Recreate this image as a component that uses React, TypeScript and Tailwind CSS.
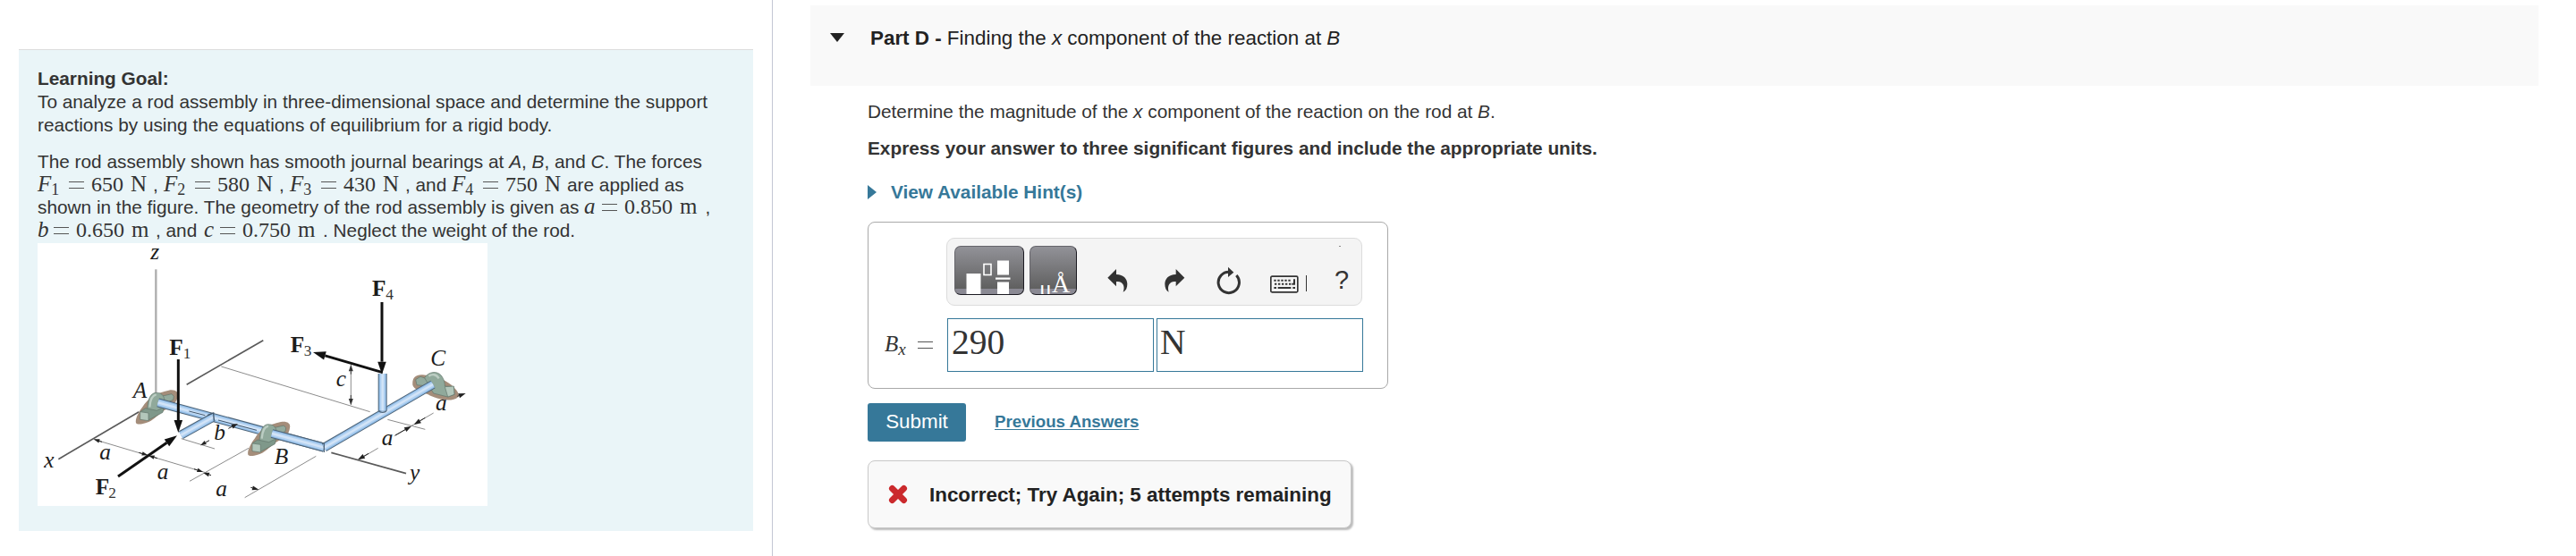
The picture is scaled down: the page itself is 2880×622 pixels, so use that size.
import { ReactNode } from "react";

function Var({ name, sub, className = "" }: { name: string; sub?: string; className?: string }) {
    return (
        <span className={`inline-block leading-[20px] font-['Liberation_Serif'] text-[25px] italic ${className}`}>
            {name}
            {sub && <span className="relative top-[4px] text-[18px] not-italic">{sub}</span>}
        </span>
    );
}

function Equals({ className = "" }: { className?: string }) {
    return (
        <span className={`inline-block h-[8px] w-[17px] border-y border-[#555] ${className}`} />
    );
}

function Qty({ value, unit, className = "" }: { value: string; unit: string; className?: string }) {
    return (
        <span className={`inline-block leading-[20px] font-['Liberation_Serif'] text-[24px] ${className}`}>
            {value}
            <span className="ml-[8px] text-[25px]">{unit}</span>
        </span>
    );
}

// Force term such as F1 = 650 N
function Force({ index, value }: { index: string; value: string }) {
    return (
        <span className="inline-block w-[129px] leading-[20px]">
            <Var name="F" sub={index} className="w-[35px]" />
            <Equals className="relative -top-[3px]" />
            <Qty value={value} unit="N" className="ml-[8px]" />
        </span>
    );
}

const rods = [
    "M404 535 L961 686",
    "M589 584 L481 644",
    "M961 686 L1326 474",
    "M1157 438 L1157 562",
];

function Rod({ d }: { d: string }) {
    return (
        <g fill="none" strokeLinejoin="round">
            <path d={d} stroke="#4e6478" strokeWidth="30" />
            <path d={d} stroke="#8fbbe6" strokeWidth="24" />
            <path d={d} stroke="#b4d3f2" strokeWidth="17" />
            <path d={d} stroke="#d3e4f7" strokeWidth="7" />
        </g>
    );
}

function Arrow({ x1, y1, x2, y2, size = 42, width = 9, color = "#111" }: { x1: number; y1: number; x2: number; y2: number; size?: number; width?: number; color?: string }) {
    const len = Math.hypot(x2 - x1, y2 - y1);
    const ux = (x2 - x1) / len;
    const uy = (y2 - y1) / len;
    const bx = x2 - ux * size;
    const by = y2 - uy * size;
    const half = size * 0.34;
    return (
        <g>
            <line x1={x1} y1={y1} x2={bx} y2={by} stroke={color} strokeWidth={width} />
            <polygon points={`${x2},${y2} ${bx - uy * half},${by + ux * half} ${bx + uy * half},${by - ux * half}`} fill={color} />
        </g>
    );
}

function Bearing({ transform }: { transform?: string }) {
    return (
        <g transform={transform}>
            <path d="M330 604 C326 590 342 562 352 550 C368 522 398 502 440 494 C462 490 474 500 470 514 C468 536 450 548 424 562 C400 578 388 598 362 604 C348 608 334 610 330 604Z" fill="#a48d7a" />
            <path d="M415 514 L450 506 L457 514 L455 526 L420 540Z" fill="#93aa9d" stroke="#61746a" strokeWidth="2" />
            <path d="M368 558 C370 520 380 504 396 502 C416 502 424 510 426 530 L424 552 L400 566Z" fill="#90a99b" stroke="#61746a" strokeWidth="2" />
            <path d="M376 550 C378 524 386 510 398 508" fill="none" stroke="#bccdc3" strokeWidth="7" />
            <path d="M344 566 L362 554 L400 562 L424 550 L420 568 L372 594Z" fill="#7f988a" stroke="#61746a" strokeWidth="2" />
            <path d="M344 566 L372 570 L372 596 L344 592Z" fill="#b3c7bb" stroke="#61746a" strokeWidth="2" />
        </g>
    );
}

function Figure() {
    return (
        <svg className="mt-px block h-[294px] w-[503px] overflow-visible bg-white" viewBox="0 0 1509 882" xmlns="http://www.w3.org/2000/svg">
            {/* Axes and extension lines */}
            <g fill="none" stroke="#8c8c8c" strokeWidth="3">
                <path d="M397 88 V510" stroke="#adadad" strokeWidth="7" />
                <path d="M500 475 L757 326" stroke="#5a5a5a" strokeWidth="5" />
                <path d="M70 725 L340 566" stroke="#5a5a5a" strokeWidth="5" />
                <path d="M985 703 L1236 773" stroke="#5a5a5a" strokeWidth="5" />
                <path d="M616 414 L1115 566" />
                <path d="M1174 592 L1300 625" />
                <path d="M190 659 L570 772" />
                <path d="M510 799 L708 688" />
                <path d="M695 854 L934 715" />
                <path d="M482 656 L594 690" />
                <path d="M1051 408 V542" />
                <path d="M1076 727 L1142 688 M1196 647 L1328 570" />
            </g>

            {/* Small dimension arrows */}
            <Arrow x1={216} y1={667} x2={188} y2={658} size={20} width={3} color="#222" />
            <Arrow x1={340} y1={703} x2={370} y2={712} size={20} width={3} color="#222" />
            <Arrow x1={402} y1={722} x2={372} y2={713} size={20} width={3} color="#222" />
            <Arrow x1={525} y1={758} x2={555} y2={768} size={20} width={3} color="#222" />
            <Arrow x1={582} y1={779} x2={556} y2={771} size={20} width={3} color="#222" />
            <Arrow x1={715} y1={820} x2={742} y2={827} size={22} width={3} color="#222" />
            <Arrow x1={576} y1={662} x2={546} y2={679} size={20} width={3} color="#222" />
            <Arrow x1={1051} y1={440} x2={1051} y2={408} size={22} width={3} color="#333" />
            <Arrow x1={1051} y1={510} x2={1051} y2={544} size={22} width={3} color="#333" />
            <Arrow x1={1110} y1={706} x2={1074} y2={727} size={24} width={3} color="#222" />
            <Arrow x1={1200} y1={645} x2={1254} y2={614} size={24} width={3} color="#222" />
            <Arrow x1={1300} y1={586} x2={1262} y2={609} size={24} width={3} color="#222" />

            {/* Bearings and rods */}
            <Bearing />
            <Rod d={rods[0]} />
            <path d="M508 564 L562 578 M606 594 L735 628" stroke="#42586e" strokeWidth="3" />
            <Rod d={rods[1]} />
            <path d="M570 578 L590 570 L592 596" fill="none" stroke="#42586e" strokeWidth="4" />
            <Arrow x1={640} y1={622} x2={672} y2={606} size={22} width={3} color="#222" />
            <Bearing transform="translate(376 106)" />
            <Rod d="M786 639 L961 686" />
            <path d="M1258 476 C1256 452 1268 440 1292 442 C1340 446 1376 462 1396 484 C1418 506 1418 518 1396 524 C1370 532 1330 520 1310 508 C1290 498 1262 492 1258 476Z" fill="#a48d7a" />
            <path d="M1268 458 L1284 448 L1314 458 L1310 480 L1272 476Z" fill="#93aa9d" stroke="#61746a" strokeWidth="2" />
            <path d="M1298 452 C1312 430 1340 428 1354 444 C1364 458 1366 470 1366 480 L1396 482 L1398 508 L1376 516 L1328 504Z" fill="#90a99b" stroke="#61746a" strokeWidth="2" />
            <path d="M1366 482 L1396 480 L1398 508 L1376 516Z" fill="#b3c7bb" stroke="#61746a" strokeWidth="2" />
            <path d="M1312 446 C1324 438 1338 440 1346 454" fill="none" stroke="#bccdc3" strokeWidth="7" />
            <Rod d={rods[2]} />
            <Rod d={rods[3]} />
            <path d="M961 670 V702" stroke="#4e6478" strokeWidth="4" />
            <path d="M1143 562 C1150 570 1164 570 1171 562" fill="none" stroke="#4e6478" strokeWidth="4" />
            <Arrow x1={1408} y1={514} x2={1436} y2={504} size={24} width={3} color="#222" />

            {/* Forces */}
            <Arrow x1={472} y1={390} x2={472} y2={636} />
            <Arrow x1={270} y1={783} x2={468} y2={646} />
            <Arrow x1={1155} y1={198} x2={1155} y2={440} />
            <Arrow x1={1157} y1={434} x2={924} y2={366} />

            <g fontFamily="Liberation Serif, serif" fontSize="76" fill="#1c1c1c">
                <g fontWeight="bold">
                    <text x="442" y="375">F</text>
                    <text x="194" y="842">F</text>
                    <text x="848" y="366">F</text>
                    <text x="1122" y="178">F</text>
                </g>
                <g fontSize="52" fill="#333">
                    <text x="488" y="388">1</text>
                    <text x="238" y="855">2</text>
                    <text x="893" y="379">3</text>
                    <text x="1168" y="190">4</text>
                </g>
                <g fontStyle="italic">
                    <text x="379" y="53">z</text>
                    <text x="22" y="752">x</text>
                    <text x="1248" y="796">y</text>
                    <text x="320" y="519">A</text>
                    <text x="794" y="741">B</text>
                    <text x="1318" y="411">C</text>
                    <text x="208" y="726">a</text>
                    <text x="401" y="793">a</text>
                    <text x="598" y="850">a</text>
                    <text x="592" y="661">b</text>
                    <text x="1001" y="480">c</text>
                    <text x="1154" y="678">a</text>
                    <text x="1335" y="562">a</text>
                </g>
            </g>
        </svg>
    );
}

function ToolButton({ className = "", children }: { className?: string; children: ReactNode }) {
    return (
        <button className={`relative h-[55px] overflow-hidden rounded-[7px] border border-r-[#1c1b22] border-b-[#1c1b22] border-t-[#66656b] border-l-[#66656b] bg-[linear-gradient(to_bottom,#929298_0%,#606060_88%,#8a8993_89%,#8a8993_100%)] ${className}`}>
            {children}
        </button>
    );
}

function Toolbar() {
    return (
        <div className="ml-[87px] flex h-[76px] w-[465px] items-start rounded-[9px] border border-[#dcdcdc] bg-[#f4f4f4] pt-[8px] pl-[8px] text-[#333]">
            <ToolButton className="w-[78px]">
                <svg className="absolute -top-px -left-px" width="78" height="55" viewBox="0 0 78 55">
                    <rect x="13.5" y="31" width="16" height="23" fill="#fff" />
                    <rect x="33" y="20.5" width="8" height="12" fill="none" stroke="#fff" strokeWidth="1.6" />
                    <rect x="48" y="16.5" width="13" height="16" fill="#fff" />
                    <rect x="46" y="35.5" width="16.5" height="2.2" fill="#fff" />
                    <rect x="48" y="40.5" width="13" height="13.5" fill="#fff" />
                </svg>
            </ToolButton>
            <ToolButton className="ml-[6px] w-[53px]">
                <span className="absolute left-[10px] top-[29px] font-['Liberation_Serif'] text-[26px] leading-[36px] text-white">μ</span>
                <span className="absolute left-[24px] top-[24px] font-['Liberation_Serif'] text-[28px] leading-[36px] text-white">Å</span>
            </ToolButton>
            <svg className="ml-[33px] mt-[26px]" width="24" height="26" viewBox="0 0 72 78">
                <path d="M4 29 L33 0 V18 C58 18 70 34 70 50 C70 62 66 72 56 77 C60 66 60 54 52 47 C47 43 41 42 33 42 V58Z" fill="currentColor" />
            </svg>
            <svg className="ml-[40px] mt-[26px]" width="24" height="26" viewBox="0 0 72 78">
                <path d="M70 29 L41 0 V18 C16 18 4 34 4 50 C4 62 8 72 17 77 C14 66 14 54 22 47 C27 43 33 42 41 42 V58Z" fill="currentColor" />
            </svg>
            <svg className="ml-[35px] mt-[23px]" width="28" height="32" viewBox="0 0 84 96">
                <path d="M45 19 A35 35 0 1 0 67 30" fill="none" stroke="currentColor" strokeWidth="9" />
                <path d="M39 2 L58 20 L39 36Z" fill="currentColor" />
            </svg>
            <svg className="ml-[32px] mt-[33px]" width="32" height="20" viewBox="0 0 96 60">
                <rect x="2.5" y="3.5" width="90" height="53" rx="4" fill="none" stroke="currentColor" strokeWidth="5" />
                <path d="M13 17 H72 M15 29 H72" stroke="currentColor" strokeWidth="6" strokeDasharray="7 5" />
                <path d="M13 42 H21 M26 42 H70 M76 42 H84 M73 29 H81 V13" fill="none" stroke="currentColor" strokeWidth="6" />
            </svg>
            <span className="ml-[8px] mt-[33px] h-[18px] w-px bg-[#333]" />
            <span className="relative ml-[31px] mt-[20px] text-[29px] leading-[36px]">
                ?
                <span className="absolute left-[5px] -top-[20px] h-px w-[2px] bg-[#888]" />
            </span>
        </div>
    );
}

export default function App() {
    return (
        <div className="flex h-[622px] w-[2880px] overflow-hidden bg-white font-['Liberation_Sans',sans-serif] text-[20.8px] leading-[26px] text-[#333]">
            <aside className="w-[864px] shrink-0 border-r border-[#c3c7d3] pt-[55px] pl-[21px]">
                <div className="h-[539px] w-[821px] whitespace-nowrap border-t border-[#dcdcdc] bg-[#eaf5f8] pt-[19px] pl-[21px]">
                    <p className="h-[26px] font-bold">Learning Goal:</p>
                    <p className="h-[26px]">To analyze a rod assembly in three-dimensional space and determine the support</p>
                    <p className="h-[26px]">reactions by using the equations of equilibrium for a rigid body.</p>

                    <p className="mt-[15px] h-[26px]">
                        The rod assembly shown has smooth journal bearings at <i>A</i>, <i>B</i>, and <i>C</i>. The forces
                    </p>
                    <p className="flex h-[25px] items-baseline">
                        <Force index="1" value="650" />
                        <span className="w-[12px]">,</span>
                        <Force index="2" value="580" />
                        <span className="w-[12px]">,</span>
                        <Force index="3" value="430" />
                        <span className="w-[52px]">, and</span>
                        <Force index="4" value="750" />
                        <span>are applied as</span>
                    </p>
                    <p className="flex h-[26px] items-baseline">
                        <span className="w-[611px]">shown in the figure. The geometry of the rod assembly is given as</span>
                        <Var name="a" className="w-[20px]" />
                        <Equals className="relative -top-[3px]" />
                        <Qty value="0.850" unit="m" className="ml-[8px]" />
                        <span className="ml-[9px]">,</span>
                    </p>
                    <p className="flex h-[26px] items-baseline">
                        <Var name="b" className="w-[18px]" />
                        <Equals className="relative -top-[3px]" />
                        <Qty value="0.650" unit="m" className="ml-[8px] w-[89px]" />
                        <span className="w-[54px]">, and</span>
                        <Var name="c" className="w-[18px]" />
                        <Equals className="relative -top-[3px]" />
                        <Qty value="0.750" unit="m" className="ml-[8px] w-[90px]" />
                        <span>. Neglect the weight of the rod.</span>
                    </p>
                    <Figure />
                </div>
            </aside>

            <main className="flex-1 pt-[6px] pl-[42px]">
                <header className="flex h-[90px] w-[1932px] items-start bg-[#f9f9f9] pt-[24px] pl-[22px] text-[22.4px] text-[#222]">
                    <svg className="mt-[7px]" width="16" height="10" viewBox="0 0 16 10">
                        <path d="M0 0 H16 L8 10Z" fill="currentColor" />
                    </svg>
                    <h2 className="ml-[29px]">
                        <b>Part D - </b>Finding the <i>x</i> component of the reaction at <i>B</i>
                    </h2>
                </header>

                <section className="pl-[64px] pt-[16px]">
                    <p>
                        Determine the magnitude of the <i>x</i> component of the reaction on the rod at <i>B</i>.
                    </p>
                    <p className="mt-[15px] font-bold">
                        Express your answer to three significant figures and include the appropriate units.
                    </p>
                    <div className="mt-[23px] flex items-center font-bold text-[#367899]">
                        <svg width="10" height="16" viewBox="0 0 10 16">
                            <path d="M0 0 L10 8 L0 16Z" fill="currentColor" />
                        </svg>
                        <span className="ml-[16px]">View Available Hint(s)</span>
                    </div>

                    <div className="mt-[20px] h-[187px] w-[582px] rounded-[8px] border border-[#a9a9a9] pt-[17px]">
                        <Toolbar />
                        <div className="mt-[14px] flex h-[60px] items-center pl-[18px] font-['Liberation_Serif'] leading-none">
                            <span className="w-[37px] pb-[4px] text-[25px] italic">
                                B<span className="relative top-[4px] text-[19px]">x</span>
                            </span>
                            <Equals />
                            <div className="ml-[16px] h-[60px] w-[231px] border border-[#367899] pt-[7px] pl-[4px] text-[39.5px]">290</div>
                            <div className="ml-[3px] h-[60px] w-[231px] border border-[#367899] pt-[7px] pl-[3px] text-[39.5px]">N</div>
                        </div>
                    </div>

                    <div className="mt-[16px] flex h-[43px] items-start">
                        <button className="h-[43px] w-[110px] rounded-[3px] bg-[#367899] pb-[2px] text-[22.4px] text-white">Submit</button>
                        <a className="ml-[32px] mt-[8px] text-[18.7px] font-bold text-[#367899] underline decoration-1 underline-offset-2">Previous Answers</a>
                    </div>

                    <div className="mt-[21px] flex h-[76px] w-[541px] items-center rounded-[8px] border border-[#c8c8c8] bg-[#f9f9f9] pl-[22px] text-[22.4px] font-bold text-[#222] shadow-[2px_2px_2px_#bbb]">
                        <svg width="22" height="22" viewBox="0 0 22 22">
                            <path d="M4.5 4.5 L17.5 17.5 M17.5 4.5 L4.5 17.5" stroke="#cb2a2d" strokeWidth="7" strokeLinecap="round" />
                        </svg>
                        <span className="ml-[24px] pt-[2px]">Incorrect; Try Again; 5 attempts remaining</span>
                    </div>
                </section>
            </main>
        </div>
    );
}
